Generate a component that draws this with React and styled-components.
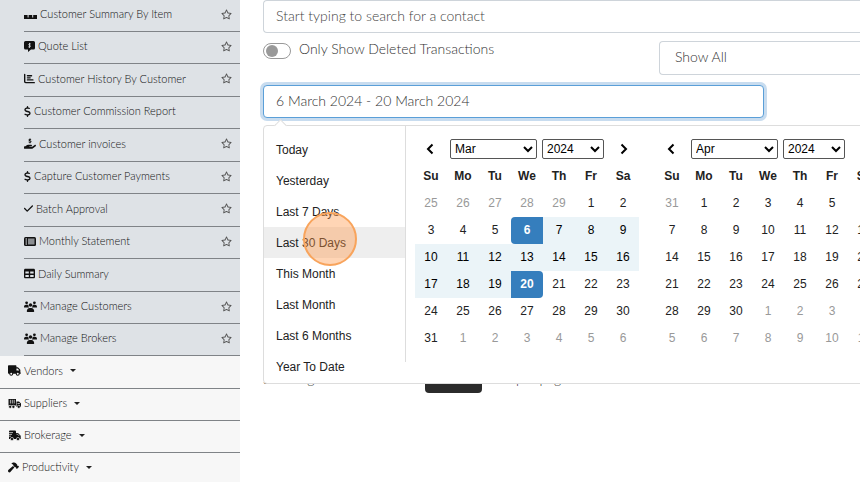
import React from "react";
import styled, { createGlobalStyle } from "styled-components";
import {
  FaChartBar,
  FaCheck,
  FaDollarSign,
  FaHammer,
  FaHandHoldingDollar,
  FaRegStar,
  FaTable,
  FaTruck,
} from "react-icons/fa6";

const GlobalStyle = createGlobalStyle`
  * {
    box-sizing: border-box;
  }
  body {
    margin: 0;
    background: #fff;
    color: #333;
    font-family: Lato, "Open Sans", sans-serif;
    font-weight: 300;
    overflow: hidden;
  }
  ul {
    list-style: none;
    margin: 0;
    padding: 0;
  }
  button, input, select {
    font: inherit;
    color: inherit;
  }
`;

const BoardIcon = () => (
  <svg viewBox="0 0 13 11" fill="currentColor">
    <path d="M0 6h3.600v2.500H0zM4.600 6h3.600v2.500H4.600zM9.200 6H13v2.500H9.200zM0 8.500h13v1.500H0z" />
  </svg>
);

const QuoteIcon = () => (
  <svg viewBox="0 0 11 11">
    <path
      fill="currentColor"
      d="M1.500 0h8A1.500 1.500 0 0 1 11 1.500v5.600a1.500 1.500 0 0 1-1.500 1.500H7L4 11V8.600H1.500A1.500 1.500 0 0 1 0 7.100V1.500A1.500 1.500 0 0 1 1.500 0z"
    />
    <path
      fill="none"
      stroke="#dee2e6"
      strokeWidth="0.800"
      d="M6.800 2.900H5.300a.8.800 0 0 0 0 1.500h.6a.8.800 0 0 1 0 1.500H4.300M5.500 1.900v5"
    />
  </svg>
);

const StatementIcon = () => (
  <svg viewBox="0 0 12 11">
    <rect y="1" width="12" height="9" rx="1.500" fill="currentColor" />
    <path stroke="#dee2e6" strokeWidth="0.800" d="M2.200 2v7" />
    <rect x="4" y="2.500" width="6.500" height="6" fill="#8b8e91" />
  </svg>
);

const PeopleIcon = () => (
  <svg viewBox="0 0 13 11" fill="currentColor">
    <circle cx="2.600" cy="1.800" r="1.400" />
    <circle cx="10.400" cy="1.800" r="1.400" />
    <circle cx="6.500" cy="4" r="1.700" />
    <path d="M0 6c0-1.300.9-2.200 2-2.200h1.600c.4 0 .6.100.9.300-.2 1 .1 1.800.7 2.400H.5A.5.500 0 0 1 0 6zM13 6c0-1.300-.9-2.200-2-2.200H9.400c-.4 0-.6.100-.9.300.2 1-.1 1.800-.7 2.400h4.700a.5.500 0 0 0 .5-.5zM2.800 10.300c0-1.900 1.200-3.300 2.900-3.300h1.600c1.700 0 2.900 1.400 2.900 3.300 0 .4-.2.700-.6.700H3.400c-.4 0-.6-.3-.6-.7z" />
  </svg>
);

const SupplierIcon = () => (
  <svg viewBox="0 0 13 11">
    <path
      fill="currentColor"
      d="M.5 1h7.500v6.500H.5zM8.500 3.500h2.500l2 2v3.500H8.500z"
    />
    <path stroke="#f7f7f7" strokeWidth="0.700" d="M2.400 1.800v3.700M4.300 1.800v3.700M6.200 1.800v3.700M9.500 5.500h2.300" />
    <g fill="currentColor" stroke="#f7f7f7" strokeWidth="0.600">
      <circle cx="2.200" cy="8.800" r="1.500" />
      <circle cx="5.400" cy="8.800" r="1.500" />
      <circle cx="10.800" cy="8.800" r="1.500" />
    </g>
  </svg>
);

const BrokerageIcon = () => (
  <svg viewBox="0 0 13 11">
    <path
      fill="currentColor"
      d="M1 1.500Q1 .5 2 .5H7q1 0 1 1V3h2l2.700 2.700V9H1z"
    />
    <path stroke="#f7f7f7" strokeWidth="0.700" d="M0 2.600h5M0 4.400h4M0 6.200h3M8.500 4.200h1l1.600 1.600" />
    <g fill="currentColor" stroke="#f7f7f7" strokeWidth="0.600">
      <circle cx="4" cy="9" r="1.600" />
      <circle cx="10" cy="9" r="1.600" />
    </g>
  </svg>
);

const DollarIcon = styled(FaDollarSign)`
  width: 7px;
`;

const HandIcon = styled(FaHandHoldingDollar)`
  width: 12px;
`;

const CheckIcon = styled(FaCheck)`
  width: 9px;
`;

const TruckIcon = styled(FaTruck)`
  width: 13px;
`;

const Page = styled.div`
  display: flex;
  height: 100vh;
  overflow: hidden;
`;

const Sidebar = styled.nav`
  flex: 0 0 240px;
  background: #f7f7f7;
  color: #111;
  font-size: 11px;
  line-height: 16px;

  svg {
    height: 11px;
  }
`;

const SubMenu = styled.ul`
  padding-left: 24px;
  background: #dee2e6;
`;

const SubItem = styled.li`
  display: flex;
  align-items: center;
  justify-content: space-between;
  height: 32px;
  padding: 0 8px 3px 0;
  border-bottom: 1px solid #7f8387;

  &:nth-child(odd):not(:first-child):not(:last-child) {
    height: 33px;
  }
`;

const NavLink = styled.a`
  display: flex;
  align-items: center;
  gap: 3px;
  color: inherit;
  text-decoration: none;
`;

const StarButton = styled.button`
  display: flex;
  padding: 0;
  border: 0;
  background: none;
  color: #555;
`;

const MenuItem = styled.li`
  display: flex;
  align-items: center;
  height: 32px;
  padding: 0 8px 3px;
  border-bottom: 1px solid #7f8387;

  &:first-child {
    height: 33px;
  }
`;

const MenuButton = styled.button`
  display: flex;
  align-items: center;
  gap: 3px;
  padding: 0;
  border: 0;
  background: none;
`;

const MenuCaret = styled.span`
  margin-left: 4px;
  border: 3px solid transparent;
  border-top-color: #222;
  border-bottom: 0;
`;

const Main = styled.main`
  flex: 1;
  min-width: 0;
  padding-left: 23px;
  font-size: 14px;
  line-height: 20px;
`;

const SearchInput = styled.input`
  display: block;
  width: 100%;
  height: 33px;
  padding: 0 12px 3px;
  border: 1px solid #ced4da;
  border-right: 0;
  border-radius: 4px 0 0 4px;
  outline: none;

  &::placeholder {
    color: #444;
    opacity: 1;
  }
`;

const FilterRow = styled.div`
  display: grid;
  grid-template-columns: minmax(0, 396px) 1fr;
  align-items: start;
  padding-top: 8px;
`;

const SwitchLabel = styled.label`
  display: flex;
  align-items: flex-end;
  gap: 8px;
  height: 18px;
`;

const Switch = styled.input`
  appearance: none;
  width: 28px;
  height: 16px;
  margin: 0;
  padding: 1px 2px;
  border: 1px solid #999;
  border-radius: 8px;

  &::before {
    content: "";
    display: block;
    width: 12px;
    height: 12px;
    border-radius: 50%;
    background: #999;
  }
`;

const ShowSelect = styled.select`
  appearance: none;
  width: 100%;
  height: 34px;
  padding: 0 15px 2px;
  border: 1px solid #ced4da;
  border-right: 0;
  border-radius: 4px 0 0 4px;
  background: #fff;
`;

const DateField = styled.div`
  position: relative;
  padding-top: 10px;
`;

const DateInput = styled.input`
  display: block;
  width: 84%;
  height: 33px;
  padding: 0 12px 3px;
  border: 1px solid #5a9fd8;
  border-radius: 4px;
  outline: none;
  box-shadow: 0 0 0 3px #c8dcef;
`;

const Picker = styled.div`
  position: absolute;
  top: 100%;
  left: 0;
  display: flex;
  align-items: flex-start;
  width: max-content;
  margin-top: 7px;
  border: 1px solid #ddd;
  border-radius: 4px;
  background: #fff;
  color: #222;
  font: 12px/19px "Liberation Sans", Arial, sans-serif;

  &::before {
    content: "";
    position: absolute;
    top: -5px;
    left: 12px;
    width: 8px;
    height: 8px;
    border: 1px solid #ddd;
    border-width: 1px 0 0 1px;
    background: #fff;
    transform: rotate(45deg);
  }
`;

const RangeList = styled.ul`
  width: 141px;
  padding: 8px 0 1px;
`;

const RangeItem = styled.li`
  position: relative;
  background: ${({ $active }) => ($active ? "#eee" : "none")};
`;

const RangeButton = styled.button`
  display: block;
  width: 100%;
  padding: 7px 12px 5px;
  border: 0;
  background: none;
  text-align: left;
`;

const ClickMarker = styled.span`
  position: absolute;
  top: -15px;
  left: 39px;
  z-index: 1;
  width: 54px;
  height: 54px;
  border: 2px solid #f8a45c;
  border-radius: 50%;
  background: rgba(255, 150, 70, 0.4);
  pointer-events: none;
`;

const Calendars = styled.div`
  display: flex;
  gap: 17px;
  height: 236px;
  padding: 10px 9px;
  border-left: 1px solid #ddd;
`;

const CalendarHead = styled.div`
  display: flex;
  align-items: center;
  height: 27px;
  padding-bottom: 1px;
  gap: 5px;
`;

const ArrowButton = styled.button`
  display: flex;
  justify-content: center;
  width: 30px;
  padding: 0;
  border: 0;
  background: none;
  color: #000;
`;

const DateSelect = styled.select`
  width: ${({ $wide }) => ($wide ? "87px" : "62px")};
  height: 20px;
  border: 1px solid #555;
  border-radius: 2px;
  background: #fff;
  color: #000;
`;

const DayTable = styled.table`
  width: 224px;
  table-layout: fixed;
  border-collapse: collapse;
  text-align: center;

  th,
  td {
    height: 27px;
    padding: 0;
  }
`;

const dayColors = {
  normal: "background: #fff;",
  off: "background: #fff; color: #999;",
  range: "background: #ebf4f8; color: #000;",
  start:
    "background: #357ebd; color: #fff; font-weight: 700; border-radius: 4px 0 0 4px;",
  end: "background: #357ebd; color: #fff; font-weight: 700; border-radius: 0 4px 4px 0;",
};

const Day = styled.td`
  ${({ $kind }) => dayColors[$kind]}
`;

const Pager = styled.div`
  display: flex;
  align-items: flex-end;
  padding-top: 243px;
`;

const PagerText = styled.span`
  padding-bottom: 4px;
`;

const PagerButton = styled.button`
  width: 57px;
  height: 32px;
  margin: 0 34px 0 auto;
  border: 0;
  border-radius: 4px;
  background: #2b2b2b;
  color: #fff;
`;

const PagerStart = styled.div`
  display: flex;
  align-items: flex-end;
  flex: 0 0 253px;
`;

const subItems = [
  { label: "Customer Summary By Item", icon: <BoardIcon />, star: true },
  { label: "Quote List", icon: <QuoteIcon />, star: true },
  { label: "Customer History By Customer", icon: <FaChartBar />, star: true },
  { label: "Customer Commission Report", icon: <DollarIcon /> },
  { label: "Customer invoices", icon: <HandIcon />, star: true },
  { label: "Capture Customer Payments", icon: <DollarIcon />, star: true },
  { label: "Batch Approval", icon: <CheckIcon />, star: true },
  { label: "Monthly Statement", icon: <StatementIcon />, star: true },
  { label: "Daily Summary", icon: <FaTable /> },
  { label: "Manage Customers", icon: <PeopleIcon />, star: true },
  { label: "Manage Brokers", icon: <PeopleIcon />, star: true },
];

const menuItems = [
  { label: "Vendors", icon: <TruckIcon /> },
  { label: "Suppliers", icon: <SupplierIcon /> },
  { label: "Brokerage", icon: <BrokerageIcon /> },
  { label: "Productivity", icon: <FaHammer /> },
];

const ranges = [
  "Today",
  "Yesterday",
  "Last 7 Days",
  "Last 30 Days",
  "This Month",
  "Last Month",
  "Last 6 Months",
  "Year To Date",
];

const months = "Jan Feb Mar Apr May Jun Jul Aug Sep Oct Nov Dec".split(" ");
const weekDays = ["Su", "Mo", "Tu", "We", "Th", "Fr", "Sa"];
const rangeStart = new Date(2024, 2, 6).getTime();
const rangeEnd = new Date(2024, 2, 20).getTime();

const getKind = (date, month) => {
  const time = date.getTime();
  if (date.getMonth() !== month) return "off";
  if (time === rangeStart) return "start";
  if (time === rangeEnd) return "end";
  return time > rangeStart && time < rangeEnd ? "range" : "normal";
};

const getWeeks = (firstDay, month) =>
  [0, 1, 2, 3, 4, 5].map((week) =>
    weekDays.map((_, day) => {
      const date = new Date(2024, firstDay.month, firstDay.day + week * 7 + day);
      return { date, kind: getKind(date, month) };
    })
  );

const Chevron = ({ right }) => (
  <svg width="8" height="12" viewBox="0 0 8 12" fill="none" stroke="currentColor" strokeWidth="2">
    <path d={right ? "M1.500 1.500L6 6l-4.500 4.500" : "M6.500 1.500L2 6l4.500 4.500"} />
  </svg>
);

const Calendar = ({ month, firstDay }) => (
  <div>
    <CalendarHead>
      <ArrowButton aria-label="Previous month">
        <Chevron />
      </ArrowButton>
      <DateSelect $wide aria-label="Month" defaultValue={months[month]}>
        {months.map((name) => (
          <option key={name}>{name}</option>
        ))}
      </DateSelect>
      <DateSelect aria-label="Year" defaultValue="2024">
        <option>2023</option>
        <option>2024</option>
        <option>2025</option>
      </DateSelect>
      <ArrowButton aria-label="Next month">
        <Chevron right />
      </ArrowButton>
    </CalendarHead>
    <DayTable>
      <thead>
        <tr>
          {weekDays.map((day) => (
            <th key={day}>{day}</th>
          ))}
        </tr>
      </thead>
      <tbody>
        {getWeeks(firstDay, month).map((week, i) => (
          <tr key={i}>
            {week.map(({ date, kind }) => (
              <Day key={date.getTime()} $kind={kind}>
                {date.getDate()}
              </Day>
            ))}
          </tr>
        ))}
      </tbody>
    </DayTable>
  </div>
);

const App = () => {
  return (
    <Page>
      <GlobalStyle />
      <Sidebar>
        <SubMenu>
          {subItems.map(({ label, icon, star }) => (
            <SubItem key={label}>
              <NavLink href="#">
                {icon}
                {label}
              </NavLink>
              {star && (
                <StarButton aria-label={`Favourite ${label}`}>
                  <FaRegStar />
                </StarButton>
              )}
            </SubItem>
          ))}
        </SubMenu>
        <ul>
          {menuItems.map(({ label, icon }) => (
            <MenuItem key={label}>
              <MenuButton>
                {icon}
                {label}
                <MenuCaret />
              </MenuButton>
            </MenuItem>
          ))}
        </ul>
      </Sidebar>
      <Main>
        <SearchInput
          aria-label="Contact"
          placeholder="Start typing to search for a contact"
        />
        <FilterRow>
          <SwitchLabel>
            <Switch type="checkbox" role="switch" />
            Only Show Deleted Transactions
          </SwitchLabel>
          <ShowSelect aria-label="Show">
            <option>Show All</option>
          </ShowSelect>
        </FilterRow>
        <DateField>
          <DateInput
            aria-label="Date range"
            defaultValue="6 March 2024 - 20 March 2024"
          />
          <Picker>
            <RangeList>
              {ranges.map((range) => (
                <RangeItem key={range} $active={range === "Last 30 Days"}>
                  <RangeButton>{range}</RangeButton>
                  {range === "Last 30 Days" && <ClickMarker />}
                </RangeItem>
              ))}
            </RangeList>
            <Calendars>
              <Calendar month={2} firstDay={{ month: 1, day: 25 }} />
              <Calendar month={3} firstDay={{ month: 2, day: 31 }} />
            </Calendars>
          </Picker>
        </DateField>
        <Pager>
          <PagerStart>
            <PagerText>Showing</PagerText>
            <PagerButton>10</PagerButton>
          </PagerStart>
          <PagerText>per page</PagerText>
        </Pager>
      </Main>
    </Page>
  );
};

export default App;
